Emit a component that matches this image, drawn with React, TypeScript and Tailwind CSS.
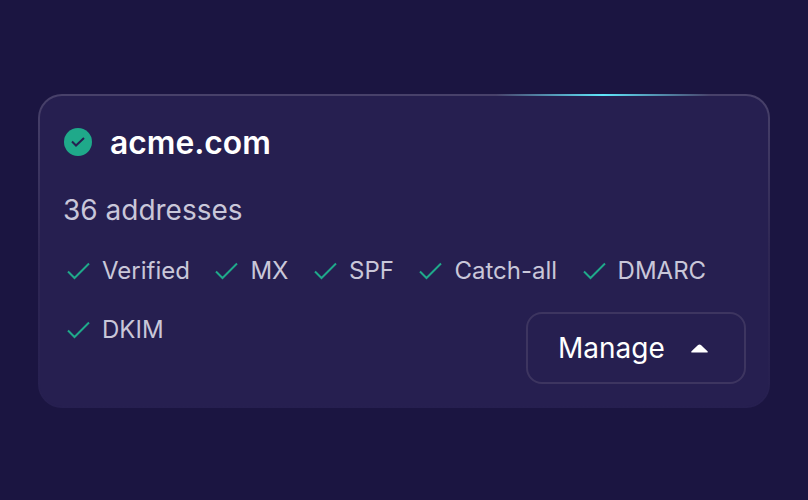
import type { ReactNode } from 'react';

const checks = ['Verified', 'MX', 'SPF', 'Catch-all', 'DMARC', 'DKIM'];

function Tick() {
    return (
        <svg width="24" height="24" viewBox="0 0 24 24" fill="none" className="shrink-0 text-[#1fa98a]">
            <path d="M2 12.5 L8.5 19 L23 4.5" stroke="currentColor" strokeWidth="2" />
        </svg>
    );
}

function Check({ children }: { children: ReactNode }) {
    return (
        <li className="flex h-[36px] items-center gap-[12px] pl-[3px] text-[24px] leading-[36px] text-[#c9c7d9]">
            <Tick />
            {children}
        </li>
    );
}

export default function App() {
    return (
        <main className="h-screen w-full bg-[#1b1541] pt-[94px] px-[38px] font-['Inter',sans-serif]">
            <div className="relative h-[314px] w-[732px] rounded-[24px] bg-gradient-to-b from-[#48416a] via-[#2f2754] via-50% to-[#261f50] p-[2px]">
                <div className="absolute right-[60px] top-0 h-[2px] w-[214px] bg-gradient-to-r from-transparent via-[#5fe6fa] via-50% to-transparent" />
                <div className="relative h-full rounded-[22px] bg-[#261f50] px-[24px] pt-[28px]">
                    <div className="flex items-center gap-[18px]">
                        <span className="mb-[2px] flex h-[28px] w-[28px] items-center justify-center rounded-full bg-[#1fa98a]">
                            <svg width="14" height="10" viewBox="0 0 14 10" fill="none">
                                <path d="M1 4.5 L5 8.5 L13 1" stroke="#261f50" strokeWidth="2" />
                            </svg>
                        </span>
                        <h1 className="text-[31.8px] leading-[38px] font-semibold text-white">acme.com</h1>
                    </div>
                    <p className="mt-[30px] -ml-[1px] text-[28px] leading-[36px] text-[#c9c7d9]">36 addresses</p>
                    <ul className="mt-[25px] -ml-[1px] flex w-[680px] flex-wrap gap-x-[21.5px] gap-y-[23px]">
                        {checks.map((label) => (
                            <Check key={label}>{label}</Check>
                        ))}
                    </ul>
                    <button className="absolute bottom-[22px] right-[22px] flex h-[72px] w-[220px] items-center gap-[26px] rounded-[16px] border-2 border-[#3d3560] pl-[30px] text-[28px] text-white">
                        Manage
                        <svg width="17" height="9" viewBox="0 0 18 10" preserveAspectRatio="none">
                            <path d="M9 0.5 C9.6 0.5 10 0.8 10.5 1.2 L17.5 8 C18 8.6 17.7 9.5 17 9.5 L1 9.5 C0.3 9.5 0 8.6 0.5 8 L7.5 1.2 C8 0.8 8.4 0.5 9 0.5 Z" fill="white" />
                        </svg>
                    </button>
                </div>
            </div>
        </main>
    );
}
